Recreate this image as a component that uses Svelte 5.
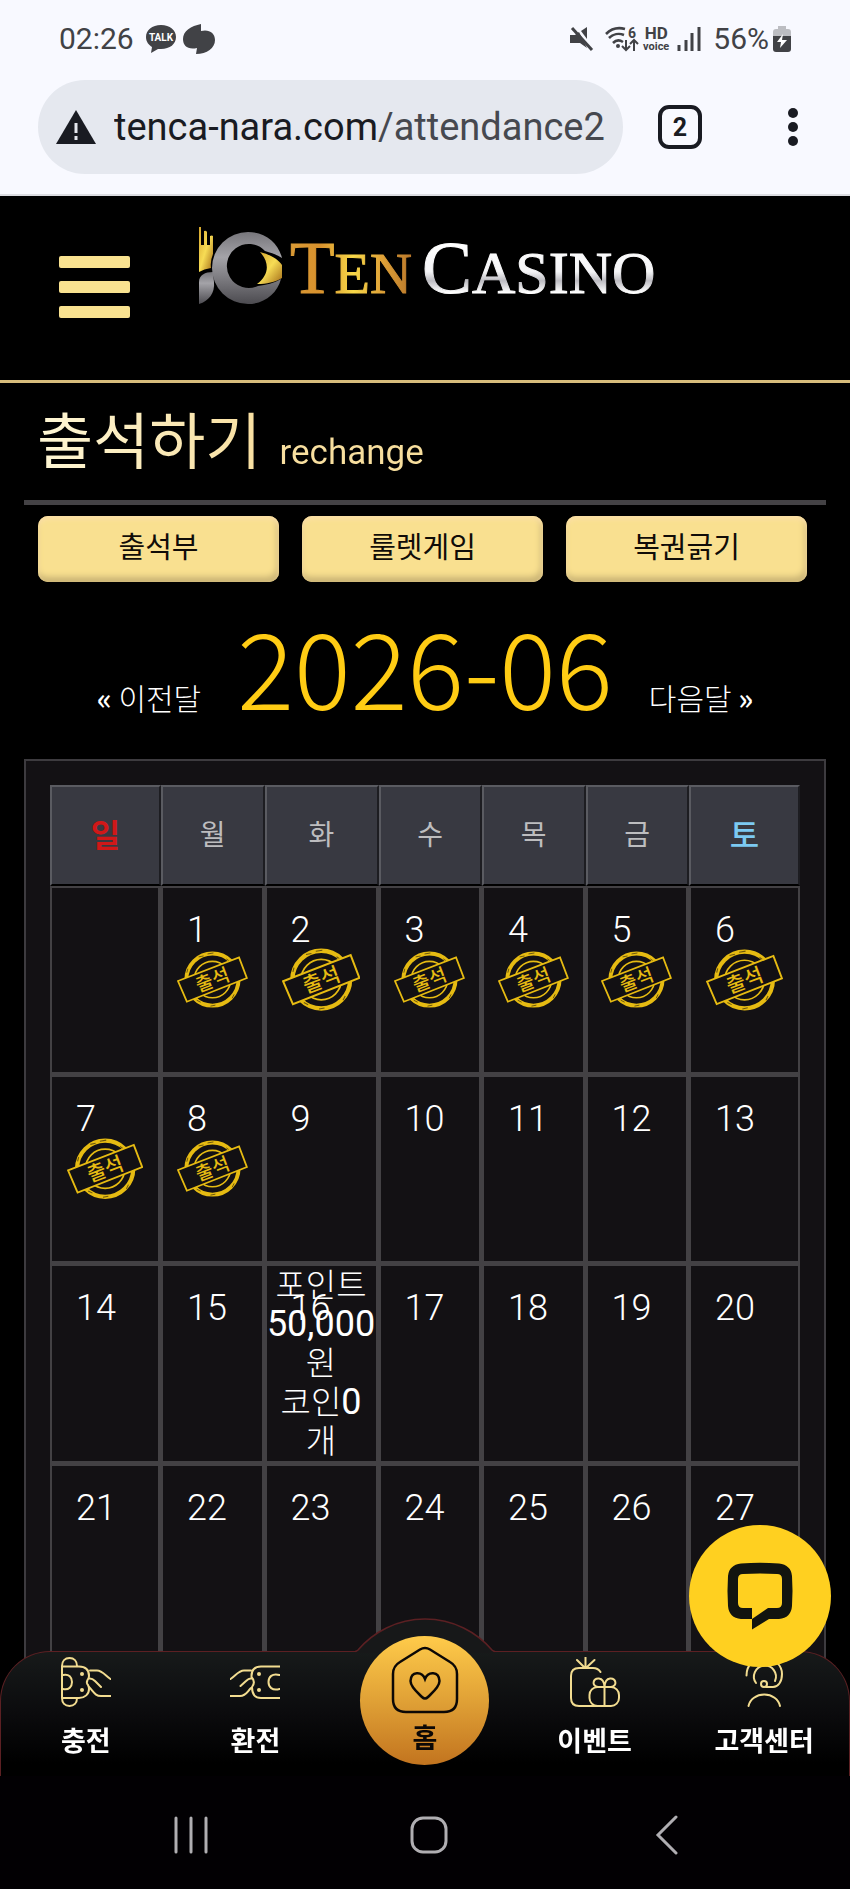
<script>
    const weekdays = ['일', '월', '화', '수', '목', '금', '토'];

    // 0 is an empty cell before the first day of the month
    const weeks = [
        [0, 1, 2, 3, 4, 5, 6],
        [7, 8, 9, 10, 11, 12, 13],
        [14, 15, 16, 17, 18, 19, 20],
        [21, 22, 23, 24, 25, 26, 27]
    ];

    const tabs = ['출석부', '룰렛게임', '복권긁기'];

    let month = '2026-06';
    let attended = [1, 2, 3, 4, 5, 6, 7, 8];
    let reward = { day: 16, point: '50,000', coin: 0 };
</script>

<div class="browser">
    <div class="status">
        <span class="clock">02:26</span>
        <svg class="talk" width="32" height="30" viewBox="0 0 32 30">
            <path d="M16 1C7 1 1 6 1 13c0 5 3 8 6 10l-1 6 7-4h3c9 0 15-5 15-12S25 1 16 1z" fill="#414246" />
            <text x="16" y="17" text-anchor="middle" font-size="10" font-weight="700" fill="#fff">TALK</text>
        </svg>
        <svg width="32" height="30" viewBox="0 0 32 30">
            <path d="M18 0v7c8-2 14 2 14 9 0 8-8 14-19 14l1-6C5 26 0 22 0 15 0 7 8 2 18 0z" fill="#414246" />
        </svg>
        <span class="push"></span>
        <svg width="26" height="26" viewBox="0 0 26 26">
            <path d="M1 9h5l4-3v0l8 16-7-5H1zM12 5l6-4v12z" fill="#414246" />
            <path d="M3 2l20 22" stroke="#414246" stroke-width="3" />
        </svg>
        <svg class="wifi" width="34" height="28" viewBox="0 0 34 28">
            <g fill="none" stroke="#414246" stroke-width="2.6">
                <path d="M1 9C6 4 13 2 20 4M4 13c4-4 10-5 15-3M8 18c3-3 7-3 10-1" />
                <path d="M21 15v9M17 21l4 4 4-4M29 26v-10M25 19l4-4 4 4" stroke-width="2" />
            </g>
            <circle cx="13" cy="21" r="2" fill="#414246" />
            <text x="23" y="13" font-size="14" font-weight="700" fill="#414246">6</text>
        </svg>
        <span class="hd"><b>HD</b><small>voice</small></span>
        <svg class="bars" width="24" height="26" viewBox="0 0 24 26">
            <path d="M2 25v-6M9 25V14M15 25V7M22 25V1" stroke="#414246" stroke-width="3" />
        </svg>
        <span class="clock">56%</span>
        <svg class="battery" width="18" height="26" viewBox="0 0 18 26">
            <path d="M5 0h8v3h2q3 0 3 3v6H0V6q0-3 3-3h2z" fill="#bcbdc2" />
            <path d="M0 10h18v13q0 3-3 3H3q-3 0-3-3z" fill="#414246" />
            <path d="M10 8l-6 8h4l-1 6 7-8h-5z" fill="#fff" />
        </svg>
    </div>
    <div class="bar">
        <div class="url">
            <svg width="40" height="36" viewBox="0 0 40 36">
                <path d="M20 1l20 34H0z" fill="#191b22" />
                <path d="M20 14v10M20 27v4" stroke="#e5e7ee" stroke-width="3" />
            </svg>
            <span class="address">tenca-nara.com<i>/attendance2</i></span>
        </div>
        <button class="tabcount">2</button>
        <button class="dots" aria-label="menu">
            <svg width="12" height="40" viewBox="0 0 12 40">
                <g fill="#191b22"><circle cx="6" cy="6" r="5" /><circle cx="6" cy="20" r="5" /><circle cx="6" cy="34" r="5" /></g>
            </svg>
        </button>
    </div>
</div>

<header>
    <button class="burger" aria-label="menu"><span></span><span></span><span></span></button>
    <svg class="logo" width="462" height="84" viewBox="0 0 462 84">
        <defs>
            <linearGradient id="silver" x1="0" y1="0" x2="0" y2="1">
                <stop offset="0" stop-color="#77767b" />
                <stop offset=".35" stop-color="#a4a3a8" />
                <stop offset="1" stop-color="#4c4b50" />
            </linearGradient>
            <linearGradient id="gold" x1="0" y1="0" x2="1" y2="1">
                <stop offset="0" stop-color="#d5a52c" />
                <stop offset=".5" stop-color="#f7dc55" />
                <stop offset="1" stop-color="#a36c18" />
            </linearGradient>
            <linearGradient id="ten" x1="0" y1="0" x2="1" y2="0">
                <stop offset="0" stop-color="#d99a35" />
                <stop offset=".25" stop-color="#d8912d" />
                <stop offset=".52" stop-color="#f8d848" />
                <stop offset=".75" stop-color="#e0a338" />
                <stop offset="1" stop-color="#b9772a" />
            </linearGradient>
            <linearGradient id="white" x1="0" y1="0" x2="0" y2="1">
                <stop offset=".2" stop-color="#fff" />
                <stop offset=".55" stop-color="#f4f4f6" />
                <stop offset=".66" stop-color="#bdbcc2" />
                <stop offset=".8" stop-color="#fff" />
            </linearGradient>
        </defs>
        <path d="M2 2h2v18h3V6q2-1 3 1v13h3V11q2-1 3 0v18q-3 7-2 14Q7 44 2 47z" fill="url(#gold)" />
        <path d="M2 57c0-7 6-10 14-10l1 10c1 11-5 19-15 22z" fill="url(#silver)" />
        <path d="M51 7c17 0 30 10 34 26-5-3-10-5-17-7a22 22 0 1 0-7 35c8-1 16-3 23-7-4 15-17 25-33 25a36 36 0 0 1 0-72z" fill="url(#silver)" />
        <path d="M63 27c11 3 18 7 22 13v13c-7 4-15 6-25 6 12-9 13-21 3-32z" fill="url(#gold)" />
        <g font-family="Liberation Serif, serif" stroke-width="1">
            <text x="93" y="68" font-size="73" fill="url(#ten)" stroke="url(#ten)">T<tspan font-size="58">EN</tspan></text>
            <text x="225" y="68" font-size="75" fill="url(#white)" stroke="url(#white)">C<tspan font-size="60">ASINO</tspan></text>
        </g>
    </svg>
</header>

<main>
    <h1>출석하기 <small>rechange</small></h1>
    <hr />
    <div class="tabs">
        {#each tabs as tab}
            <button>{tab}</button>
        {/each}
    </div>

    <div class="month">
        <a href="#prev"><b>«</b> 이전달</a>
        <h2>{month}</h2>
        <a href="#next">다음달 <b>»</b></a>
    </div>

    <div class="calendar">
        <table>
            <colgroup>
                <col class="edge" /><col /><col class="wide" /><col /><col /><col /><col class="edge" />
            </colgroup>
            <thead>
                <tr>
                    {#each weekdays as name, i}
                        <th class:sun={i === 0} class:sat={i === 6}>{name}</th>
                    {/each}
                </tr>
            </thead>
            <tbody>
                {#each weeks as week}
                    <tr>
                        {#each week as day}
                            <td>
                                {#if day}<span class="day">{day}</span>{/if}
                                {#if attended.includes(day)}
                                    <svg class="stamp" viewBox="0 0 72 58">
                                        <g fill="none" stroke="#e6bb12">
                                            <circle cx="36" cy="29" r="26.5" stroke-width="4" />
                                            <circle cx="36" cy="29" r="18.5" stroke-width="1.6" />
                                        </g>
                                        <path d="M22 6l5-1M31 3l6-1M50 8l3 2M20 50l4 2M34 56l5-1M58 44l-2 4M10 22l1-4" stroke="#6b560c" stroke-width="1" />
                                        <path d="M1 30.500L63 6.500L71 27.500L10 51.500Z" fill="#121013" stroke="#e6bb12" stroke-width="1.800" />
                                        <text x="36" y="36" transform="rotate(-21 36 29)" text-anchor="middle" font-size="19" font-weight="500" fill="#e6bb12">출석</text>
                                    </svg>
                                {/if}
                                {#if day === reward.day}
                                    <p>포인트<br /><b>{reward.point}</b><br />원<br />코인<b>{reward.coin}</b><br />개</p>
                                {/if}
                            </td>
                        {/each}
                    </tr>
                {/each}
            </tbody>
        </table>
    </div>
</main>

<nav class="bottom">
    <svg class="bump" width="140" height="36" viewBox="0 0 140 36">
        <path d="M0 36L3 33A88 88 0 0 1 137 33L140 36Z" fill="#171819" />
        <path d="M0 34.500Q2 34 3 33A88 88 0 0 1 137 33Q138 34 140 34.500" fill="none" stroke="#5c2023" stroke-width="1.500" />
    </svg>
    <a href="#charge">
        <svg class="icon" viewBox="0 0 50 50">
            <path d="M16 9C16 4 13 1 8.500 1S1 4 1 9V41C1 46 4 49 8.500 49S16 46 16 41" />
            <path d="M2 9.500H18C25 9.500 28 13 28 19Q28 21 26.500 23Q25 26 27 28Q28 30 28 32C28 37 24 41 18 41H2" />
            <path d="M2 18C14 15 14 35 2 32M29 13.500H36C41 13.500 44 18 49.500 22M28 21.500Q31 21 34 24L40 30M28 30C33 35 34 39 40 39H49.500" />
            <circle class="dot" cx="21" cy="17" r="2" /><circle class="dot" cx="21" cy="33" r="2" />
        </svg>
        <span>충전</span>
    </a>
    <a href="#exchange">
        <svg class="icon" viewBox="0 0 50 50">
            <path d="M50 9.500H31C25 9.500 21.500 13 21.500 19V20Q26 25 22 30Q22 41 31 41H50" />
            <path d="M49.500 18C42 16 38.500 20 38.500 25S42 34 49.500 32M21 13.500H14C9 13.500 6 18 .5 22M21.500 21.500Q19 21 16 24L10.500 29M.5 39H10C16 39 17 35 21 31" />
            <circle class="dot" cx="29" cy="17" r="2" /><circle class="dot" cx="29" cy="33" r="2" />
        </svg>
        <span>환전</span>
    </a>
    <a href="#home" class="home">
        <svg width="68" height="68" viewBox="-1 -1 68 68">
            <path d="M28 2.500Q33-.5 38 2.500L58 15Q65 19 65 27V52Q65 65 52 65H14Q1 65 1 52V27Q1 19 8 15Z" />
            <path d="M33 32C30 24 19 24 18.500 34C18.500 40 26 46 30 50Q33 53 36 50C40 46 47.500 40 47.500 34C47 24 36 24 33 32Z" />
        </svg>
        <span>홈</span>
    </a>
    <a href="#event">
        <svg class="icon" viewBox="0 0 50 50">
            <path d="M30.500 15Q28 11 23 11H9Q1 11 1 19V41Q1 49 9 49H28M15.500 .5V10M7 3L14 10M24.500 3L17 10" />
            <rect x="19.500" y="30" width="29.500" height="19" rx="8" />
            <path d="M34.500 30V49M34.500 30H28C21 29 23 21 29 21.500Q34 22 34.500 30Q35 22 40 21.500C46 21 48 29 41 30H34.500" />
        </svg>
        <span>이벤트</span>
    </a>
    <a href="#support">
        <svg class="icon" viewBox="0 0 50 50">
            <path d="M7.500 18.500C7.500 8 15 1 25 1S43 8 43 17C43 25 39 30 34 30H27" />
            <path d="M17 26A11 11 0 1 1 36 24" />
            <circle cx="25" cy="27" r="3" />
            <path d="M9.500 49A16 14 0 0 1 41 49" />
        </svg>
        <span>고객센터</span>
    </a>
</nav>

<button class="chat" aria-label="chat">
    <svg width="68" height="68" viewBox="0 0 68 68">
        <path fill-rule="evenodd" d="M15 1.500Q34 0 53 1.500Q65 3 66 14Q67 28 66 44Q65 56 53 57H43L26 67.500V57H15Q3 56 2 44Q1 28 2 14Q3 3 15 1.500ZM17 12Q12 12 12 17V41Q12 46 17 46H26V57L42 46H51Q56 46 56 41V17Q56 12 51 12Q34 11 17 12Z" />
    </svg>
</button>

<div class="system">
    <button aria-label="recent">
        <svg width="40" height="40" viewBox="0 0 40 40"><path d="M5 3V37M20 3V37M35 3V37" /></svg>
    </button>
    <button aria-label="home">
        <svg width="40" height="40" viewBox="0 0 40 40"><rect x="3" y="3" width="34" height="34" rx="11" /></svg>
    </button>
    <button aria-label="back">
        <svg width="40" height="40" viewBox="0 0 40 40"><path d="M29 2L11 20L29 38" /></svg>
    </button>
</div>

<style>
    :global(body) {
        background: #000;
        color: #fff;
        font-family: Roboto, 'Noto Sans CJK KR', sans-serif;
    }

    button {
        border: 0;
        padding: 0;
        background: none;
        font-family: inherit;
        cursor: pointer;
    }

    a {
        color: inherit;
        text-decoration: none;
    }

    svg {
        display: block;
        flex: none;
    }

    .browser {
        background: #f8f9ff;
        border-bottom: 2px solid #dcdde2;
    }

    .status {
        display: flex;
        align-items: center;
        height: 78px;
        padding: 0 59px;
        color: #414246;
        box-sizing: border-box;
    }

    .clock {
        font-size: 30px;
        line-height: 40px;
    }

    .talk {
        margin: 0 6px 0 11px;
    }

    .push {
        flex: 1;
    }

    .wifi {
        margin: 0 4px 0 10px;
    }

    .hd {
        display: flex;
        flex-direction: column;
        align-items: center;
        font-size: 17px;
        line-height: 15px;
    }

    .hd small {
        font-size: 11px;
        line-height: 11px;
        font-weight: 700;
    }

    .bars {
        margin: 0 12px 0 8px;
    }

    .battery {
        margin-left: 4px;
    }

    .bar {
        display: flex;
        align-items: center;
        padding: 2px 51px 20px 38px;
    }

    .url {
        display: flex;
        align-items: center;
        flex: 1;
        min-width: 0;
        height: 94px;
        padding: 0 18px;
        border-radius: 47px;
        background: #e5e8ef;
        box-sizing: border-box;
    }

    .address {
        flex: 1;
        margin-left: 18px;
        overflow: hidden;
        white-space: nowrap;
        font-size: 38px;
        color: #191b22;
    }

    .address i {
        font-style: normal;
        color: #46484f;
    }

    .tabcount {
        width: 44px;
        height: 44px;
        margin: 0 85px 0 35px;
        border: 4px solid #191b22;
        border-radius: 11px;
        color: #191b22;
        font-size: 25px;
        font-weight: 700;
    }

    header {
        display: flex;
        align-items: flex-start;
        height: 184px;
        padding: 0 59px;
        border-bottom: 3px solid #d8bd7c;
    }

    .burger {
        display: flex;
        flex-direction: column;
        gap: 13px;
        margin-top: 60px;
    }

    .burger span {
        width: 71px;
        height: 12px;
        border-radius: 2px;
        background: #f9e290;
    }

    .logo {
        margin: 29px 0 0 67px;
    }

    main {
        padding: 0 24px;
    }

    h1 {
        display: flex;
        align-items: baseline;
        gap: 18px;
        height: 117px;
        margin: 0;
        padding-left: 13px;
        font-family: 'Noto Sans CJK KR', sans-serif;
        font-size: 61px;
        font-weight: 400;
        line-height: 110px;
        background: linear-gradient(90deg, #fff8d8, #f8dfa0 240px, #f5dc94);
        background-clip: text;
        -webkit-background-clip: text;
        color: transparent;
    }

    h1 small {
        font-family: Roboto, sans-serif;
        font-size: 35px;
        line-height: 40px;
    }

    hr {
        height: 5px;
        margin: 0;
        border: 0;
        background: #444245;
    }

    .tabs {
        display: grid;
        grid-template-columns: repeat(3, 1fr);
        gap: 23px;
        padding: 11px 19px 0 14px;
    }

    .tabs button {
        height: 66px;
        padding-bottom: 8px;
        border-radius: 10px;
        background: #f9e090;
        box-shadow: inset 0 3px 5px #fbdfa8, inset -2px -5px 6px #c9b374;
        color: #100c08;
        font-size: 29px;
    }

    .month {
        display: flex;
        justify-content: center;
        align-items: baseline;
        gap: 36px;
        height: 177px;
        font-family: 'Noto Sans CJK KR', sans-serif;
        font-weight: 300;
        font-size: 30px;
        line-height: 40px;
    }

    .month b {
        font-weight: 500;
    }

    .month h2 {
        margin: 0;
        font-size: 106px;
        font-weight: 300;
        line-height: 164px;
        color: #ffcc14;
    }

    .calendar {
        padding: 24px 24px 200px;
        border: 2px solid #3d3b3f;
        border-bottom: 0;
        background: #131114;
    }

    table {
        width: 100%;
        table-layout: fixed;
        border-collapse: separate;
        border-spacing: 0;
    }

    .edge {
        width: 111px;
    }

    .wide {
        width: 114px;
    }

    th {
        height: 97px;
        padding: 0;
        border: 2px solid #5a5b61;
        border-right-color: #1d1d21;
        border-bottom: 2px solid #000;
        background: #383941;
        color: #bdbdbf;
        font-size: 28px;
        font-weight: 400;
        line-height: 40px;
    }

    th.sun {
        color: #d01818;
        font-size: 32px;
        font-weight: 700;
    }

    th.sat {
        color: #7ccaf2;
        font-size: 32px;
        font-weight: 500;
    }

    td {
        position: relative;
        height: 189px;
        padding: 0;
        border: 2px solid #434144;
        border-right-width: 3px;
        border-bottom-width: 3px;
        box-sizing: border-box;
    }

    td:last-child {
        border-right-width: 2px;
    }

    /* the last row runs on under the bottom menu */
    tbody tr:last-child td {
        height: 200px;
    }

    .day {
        position: absolute;
        top: 21px;
        left: 24px;
        font-size: 36px;
        font-weight: 300;
        line-height: 42px;
    }

    .stamp {
        width: 72%;
        margin: 0 auto;
    }

    td p {
        margin: 0;
        text-align: center;
        white-space: nowrap;
        font-size: 33px;
        font-weight: 300;
        line-height: 39px;
    }

    td p b {
        font-size: 36px;
        font-weight: 400;
    }

    .bottom {
        position: fixed;
        left: 0;
        right: 0;
        bottom: 113px;
        display: grid;
        grid-template-columns: repeat(5, 1fr);
        height: 125px;
        border: 1px solid #5c2023;
        border-bottom: 0;
        border-radius: 50px 50px 0 0;
        background: linear-gradient(#171a1a, #0b0b0d 50%, #000 90%);
        box-sizing: border-box;
    }

    .bump {
        position: absolute;
        left: 50%;
        top: -35px;
        margin-left: -70px;
    }

    .bottom a {
        display: flex;
        flex-direction: column;
        align-items: center;
        padding-top: 5px;
        font-size: 27px;
        font-weight: 700;
        line-height: 36px;
    }

    .bottom span {
        margin-top: 17px;
    }

    .icon {
        width: 50px;
        height: 50px;
        fill: none;
        stroke: #f2dc90;
        stroke-width: 2;
        stroke-linecap: round;
        stroke-linejoin: round;
    }

    .dot {
        fill: #f2dc90;
        stroke: none;
    }

    .bottom .home {
        position: relative;
        justify-self: center;
        width: 129px;
        height: 129px;
        margin-top: -16px;
        padding-top: 10px;
        border-radius: 50%;
        background: linear-gradient(#ffcb4a, #e0a136 50%, #c2741f);
        box-sizing: border-box;
        color: #0c0806;
    }

    .home svg {
        fill: none;
        stroke: #0c0806;
        stroke-width: 2.5;
    }

    .bottom .home span {
        margin-top: 7px;
    }

    .chat {
        position: fixed;
        right: 19px;
        bottom: 222px;
        display: flex;
        align-items: center;
        justify-content: center;
        width: 142px;
        height: 142px;
        border-radius: 50%;
        background: #ffd020;
    }

    .chat svg {
        fill: #12140f;
    }

    .system {
        position: fixed;
        left: 0;
        right: 0;
        bottom: 0;
        display: flex;
        justify-content: center;
        align-items: center;
        gap: 198px;
        height: 113px;
        padding: 4px 0 0 7px;
        background: #020003;
        box-sizing: border-box;
    }

    .system svg {
        fill: none;
        stroke: #b0aeb2;
        stroke-width: 3;
        stroke-linecap: round;
    }
</style>
